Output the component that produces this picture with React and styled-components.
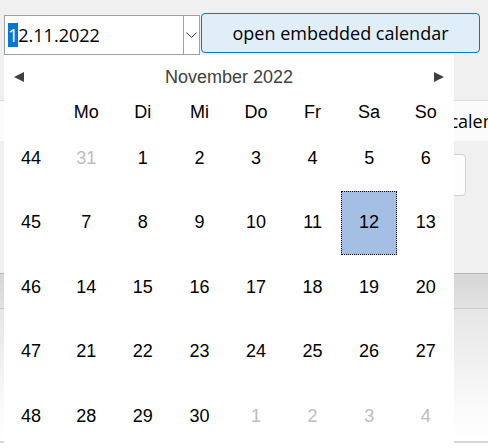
import React from "react";
import styled, { createGlobalStyle } from "styled-components";

const Global = createGlobalStyle`
  html, body { margin: 0; padding: 0; background: #f0f0f0; overflow: hidden; }
  body { width: 488px; height: 448px; position: relative; font-family: "Open Sans", "Liberation Sans", sans-serif; }
`;

const Page = styled.div`
  position: relative;
  width: 488px;
  height: 448px;
  display: flex;
  flex-direction: column;
`;

const TopRow = styled.div`
  display: flex;
  align-items: flex-start;
  gap: 1px;
  padding: 13px 0 0 4px;
  height: 47px;
`;

const Combo = styled.div`
  margin-top: 2px;
  width: 196px;
  height: 40px;
  box-sizing: border-box;
  border: 1px solid #a0a0a0;
  background: #fff;
  display: flex;
  align-items: center;
`;

const ComboText = styled.div`
  flex: 1;
  padding-left: 3px;
  font-size: 18px;
  color: #000;
  line-height: 22px;
`;

const Sel = styled.span`
  background: #0078d7;
  color: #fff;
`;

const ComboArrow = styled.div`
  width: 15px;
  height: 100%;
  border-left: 1px solid #a0a0a0;
  display: flex;
  align-items: center;
  justify-content: center;
`;

const Button = styled.div`
  width: 279px;
  height: 40px;
  box-sizing: border-box;
  border: 1px solid #0078d7;
  border-radius: 4px;
  background: #e0eef9;
  display: flex;
  align-items: center;
  justify-content: center;
  font-size: 18px;
  color: #000;
`;

const Spacer = styled.div`
  height: 40px;
`;

const Strip = styled.div`
  height: 40px;
  border-top: 1px solid #dadada;
  background: #fbfbfb;
  display: flex;
  align-items: center;
  padding-left: 306px;
  font-size: 18px;
  color: #000;
  white-space: nowrap;
  overflow: hidden;
`;

const InputRow = styled.div`
  padding: 13px 0 0 0;
  height: 119px;
  display: flex;
`;

const Input = styled.div`
  margin-left: 300px;
  width: 166px;
  height: 42px;
  box-sizing: border-box;
  background: #fdfdfd;
  border: 1px solid #d0d0d0;
  border-radius: 4px;
`;

const Toolbar = styled.div`
  height: 34px;
  border-top: 1px solid #b8b8b8;
  border-bottom: 1px solid #c8c8c8;
  background: linear-gradient(#d6d6d6, #e2e2e2);
`;

const Lower = styled.div`
  height: 132px;
  background: linear-gradient(#e6e6e6, #fafafa 75%, #ffffff);
  border-bottom: 2px solid #d8d8d8;
`;

const Bottom = styled.div`
  flex: 1;
  background: #fff;
`;

const Popup = styled.div`
  position: absolute;
  left: 4px;
  top: 55px;
  width: 450px;
  height: 400px;
  background: #fff;
  font-family: "Liberation Sans", Arial, sans-serif;
  font-size: 18px;
  color: #000;
`;

const Nav = styled.div`
  height: 44px;
  display: flex;
  align-items: center;
  justify-content: space-between;
  padding: 0 10px;
`;

const Title = styled.div`
  color: #404040;
`;

const Grid = styled.div`
  display: grid;
  grid-template-columns: 54px repeat(7, 1fr);
  grid-template-rows: 27px repeat(5, 64.5px);
`;

const Cell = styled.div`
  display: flex;
  align-items: center;
  justify-content: center;
  box-sizing: border-box;
  color: ${(p) => (p.$dim ? "#bdbdbd" : "#000")};
  ${(p) =>
    p.$selected &&
    `background: #a4bee4; border: 1px dotted #000; margin: 0.5px 0 0.5px 0;`}
`;

const Tri = ({ dir }) => (
  <svg width="10" height="10" viewBox="0 0 10 10">
    <polygon points={dir === "left" ? "10,0 10,10 0,5" : "0,0 0,10 10,5"} fill="#404040" />
  </svg>
);

const days = ["Mo", "Di", "Mi", "Do", "Fr", "Sa", "So"];
const weeks = [
  [44, [[31, 1], 1, 2, 3, 4, 5, 6]],
  [45, [7, 8, 9, 10, 11, 12, 13]],
  [46, [14, 15, 16, 17, 18, 19, 20]],
  [47, [21, 22, 23, 24, 25, 26, 27]],
  [48, [28, 29, 30, [1, 1], [2, 1], [3, 1], [4, 1]]],
];

export default function App() {
  return (
    <>
      <Global />
      <Page>
        <TopRow>
          <Combo>
            <ComboText>
              <Sel>1</Sel>2.11.2022
            </ComboText>
            <ComboArrow>
              <svg width="11" height="6" viewBox="0 0 11 6">
                <polyline points="0.5,0.5 5.5,5.5 10.5,0.5" fill="none" stroke="#333" strokeWidth="1" />
              </svg>
            </ComboArrow>
          </Combo>
          <Button>open embedded calendar</Button>
        </TopRow>
        <Spacer />
        <Strip>open embedded calendar</Strip>
        <InputRow>
          <Input />
        </InputRow>
        <Toolbar />
        <Lower />
        <Bottom />
        <Popup>
          <Nav>
            <Tri dir="left" />
            <Title>November 2022</Title>
            <Tri dir="right" />
          </Nav>
          <Grid>
            <Cell />
            {days.map((d) => (
              <Cell key={d}>{d}</Cell>
            ))}
            {weeks.map(([w, ds]) => (
              <React.Fragment key={w}>
                <Cell>{w}</Cell>
                {ds.map((d, i) => {
                  const dim = Array.isArray(d);
                  const v = dim ? d[0] : d;
                  return (
                    <Cell key={i} $dim={dim} $selected={!dim && v === 12}>
                      {v}
                    </Cell>
                  );
                })}
              </React.Fragment>
            ))}
          </Grid>
        </Popup>
      </Page>
    </>
  );
}
